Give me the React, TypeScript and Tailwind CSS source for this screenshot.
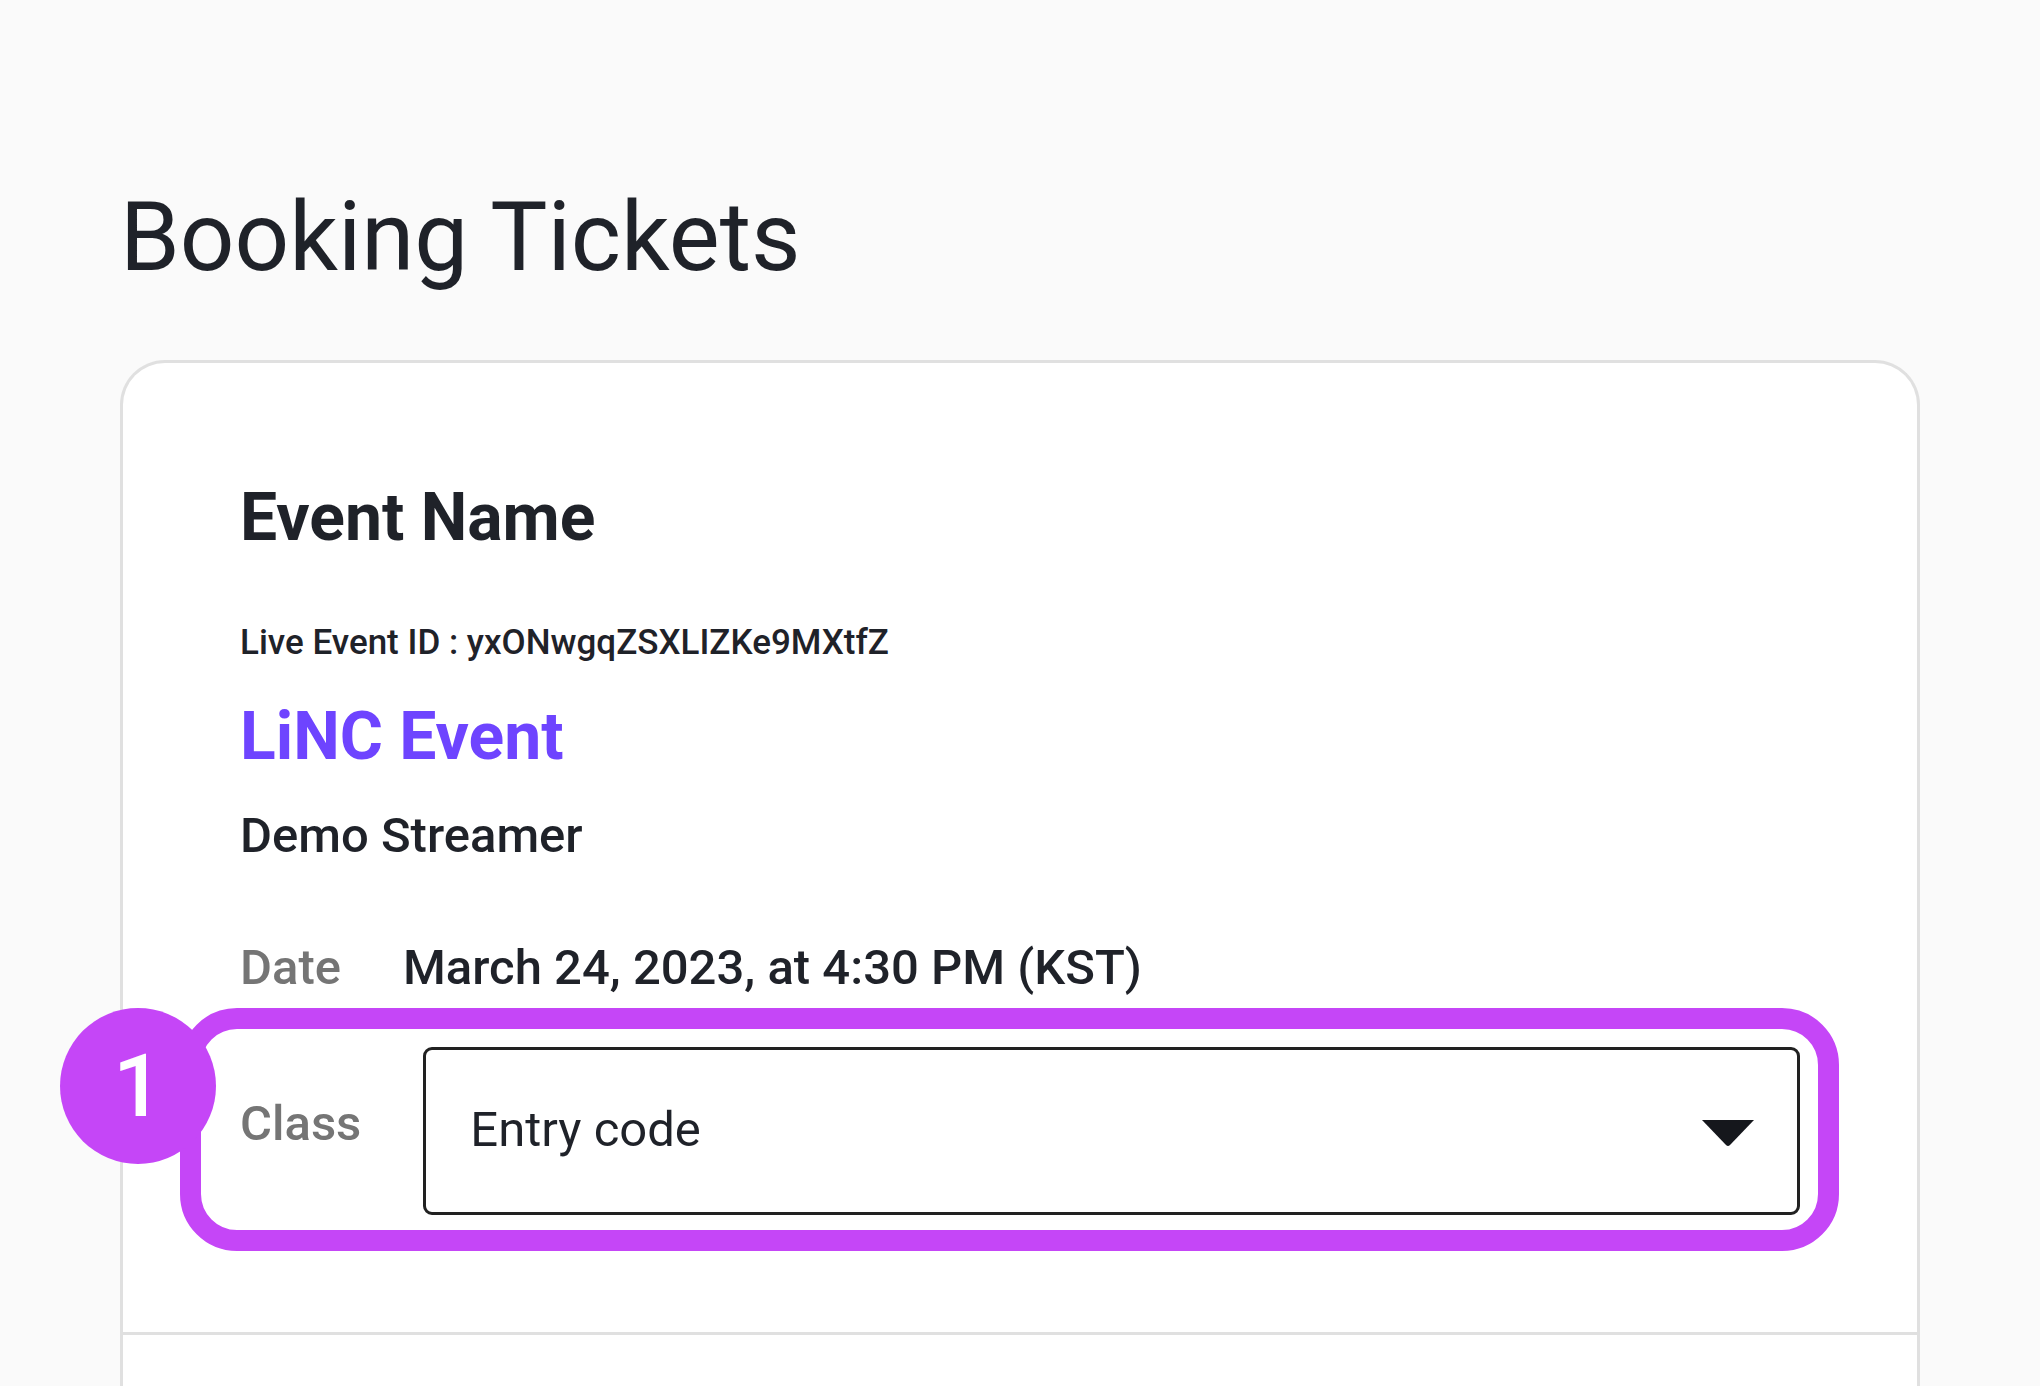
import { useState } from 'react';

const CLASS_OPTIONS = ['Entry code'];

function StepHighlight({ step }: { step: number }) {
  return (
    <div className="pointer-events-none absolute -top-[39px] -right-[39px] -bottom-9 -left-[60px] rounded-[57px] border-[21px] border-[#c546f7]">
      <span className="absolute -top-[21px] -left-[141px] flex size-[156px] items-center justify-center rounded-full bg-[#c546f7] text-[88px] leading-none font-medium text-white">
        {step}
      </span>
    </div>
  );
}

function ClassSelect() {
  const [value, setValue] = useState(CLASS_OPTIONS[0]);

  return (
    <div className="relative flex items-center gap-[62px]">
      <label htmlFor="ticket-class" className="pb-3.5 text-[#757575]">
        Class
      </label>
      <div className="relative flex-1">
        <select
          id="ticket-class"
          value={value}
          onChange={(e) => setValue(e.target.value)}
          className="block h-[168px] w-full appearance-none rounded-[9px] border-[3px] border-[#212121] bg-white pr-32 pb-0.5 pl-11 font-normal text-[#1f2229]"
        >
          {CLASS_OPTIONS.map((option) => (
            <option key={option}>{option}</option>
          ))}
        </select>
        <svg
          viewBox="0 0 54 30"
          className="pointer-events-none absolute top-[71px] right-[45px] h-[30px] w-[54px] fill-[#15171c]"
          aria-hidden="true"
        >
          <path d="M1 2h52L29 27q-2 2-4 0z" />
        </svg>
      </div>
      <StepHighlight step={1} />
    </div>
  );
}

export default function App() {
  return (
    <main className="flex min-h-screen flex-col bg-[#fafafa] px-[120px] pt-[177px] font-[Roboto,sans-serif] text-[#1f2229]">
      <h1 className="mb-[63px] text-[96px] leading-[120px]">Booking Tickets</h1>

      <div className="flex-1 rounded-t-[45px] border-[3px] border-b-0 border-[#e0e0e0] bg-white">
        <section className="border-b-[3px] border-[#e0e0e0] px-[117px] pt-[115px] pb-[117px] text-[49px] leading-[60px] font-medium">
          <h2 className="mb-[61px] text-[66px] leading-[80px] font-bold">Event Name</h2>
          <p className="mb-[30px] text-[35px] leading-[48px]">
            Live Event ID : yxONwgqZSXLIZKe9MXtfZ
          </p>
          <h3 className="mb-[29px] text-[66px] leading-[80px] font-bold text-[#6e44ff]">LiNC Event</h3>
          <p className="mb-[72px]">Demo Streamer</p>
          <dl className="mb-[49px] flex gap-[62px]">
            <dt className="text-[#757575]">Date</dt>
            <dd>March 24, 2023, at 4:30 PM (KST)</dd>
          </dl>
          <ClassSelect />
        </section>
      </div>
    </main>
  );
}
